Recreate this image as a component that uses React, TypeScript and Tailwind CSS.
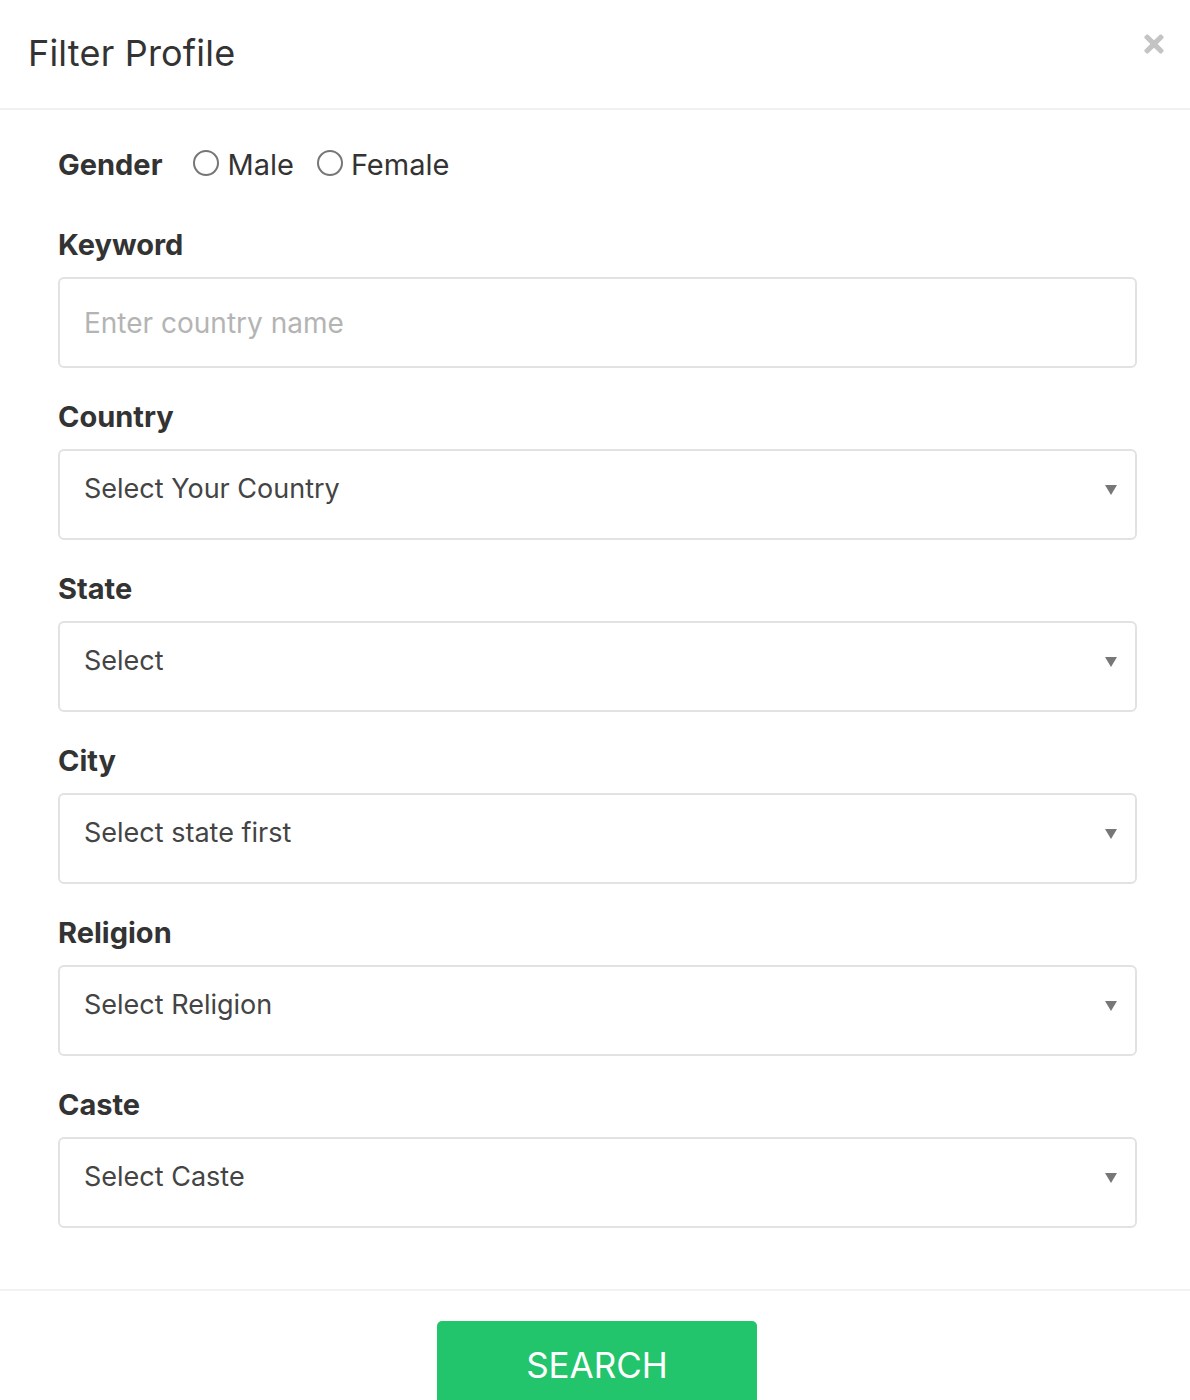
import { FaTimes } from "react-icons/fa";

const SelectBox = ({ text }: { text: string }) => {
    return (
        <div className="flex items-center justify-between h-[91px] border-2 border-[#e2e2e2] rounded-[6px] pl-[24px] pr-[18px]">
            <span className="text-[27px] text-[#444] -mt-[11px]">{text}</span>
            <svg width="12" height="10" viewBox="0 0 12 10" className="-mt-[9px]">
                <polygon points="0,0 12,0 6,10" fill="#777" />
            </svg>
        </div>
    )
}

const Field = ({ label, children }: { label: string; children: React.ReactNode }) => {
    return (
        <div className="mb-[29px]">
            <div className="h-[40px] leading-[40px] mb-[12px] text-[29px] font-bold text-[#333]">{label}</div>
            {children}
        </div>
    )
}

const Radio = ({ label }: { label: string }) => {
    return (
        <label className="flex items-center gap-[8px]">
            <span className="w-[26px] h-[26px] rounded-full border-2 border-[#767676] -mt-[5px]" />
            <span className="text-[29px] text-[#333]">{label}</span>
        </label>
    )
}

export default function App() {
    return (
        <div className="w-[1190px] h-[1400px] overflow-hidden bg-white font-['Inter',sans-serif]">
            <div className="flex items-start justify-between h-[110px] border-b-2 border-[#f0f0f0] pl-[28px] pr-[22px]">
                <h1 className="mt-[30px] text-[36px] leading-[46px] text-[#333] tracking-[0.2px]">Filter Profile</h1>
                <FaTimes className="mt-[30px] text-[#c4c4c4]" size={28} />
            </div>

            <div className="pl-[58px] pr-[53px] pt-[35px] pb-[32px]">
                <div className="flex items-center h-[40px] mb-[40px]">
                    <span className="text-[29px] font-bold text-[#333] mr-[31px]">Gender</span>
                    <div className="flex items-center gap-[23px]">
                        <Radio label="Male" />
                        <Radio label="Female" />
                    </div>
                </div>

                <Field label="Keyword">
                    <input
                        className="w-full h-[91px] border-2 border-[#e2e2e2] rounded-[6px] px-[24px] text-[28px] text-[#444] placeholder:text-[#b4b4b4] outline-none"
                        placeholder="Enter country name"
                    />
                </Field>
                <Field label="Country"><SelectBox text="Select Your Country" /></Field>
                <Field label="State"><SelectBox text="Select" /></Field>
                <Field label="City"><SelectBox text="Select state first" /></Field>
                <Field label="Religion"><SelectBox text="Select Religion" /></Field>
                <Field label="Caste"><SelectBox text="Select Caste" /></Field>
            </div>

            <div className="border-t-2 border-[#f2f2f2] flex justify-center pt-[30px] pl-[4px]">
                <button className="w-[320px] h-[100px] rounded-[5px] bg-[#22c56c] text-white text-[35px] pb-[12px]">SEARCH</button>
            </div>
        </div>
    )
}
